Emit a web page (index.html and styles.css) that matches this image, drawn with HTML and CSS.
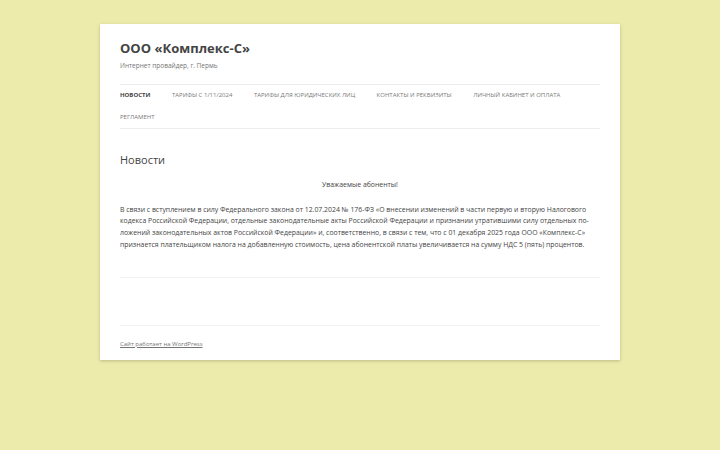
FILE: index.html
```html
<!DOCTYPE html>
<html lang="ru">
<head>
  <meta charset="UTF-8">
  <meta name="viewport" content="width=device-width, initial-scale=1.0">
  <title>Новости | ООО «Комплекс-С»</title>
  <link rel="stylesheet" href="styles.css">
</head>
<body>
  <div class="site">
    <header class="site-header">
      <h1 class="site-title"><a href="#">ООО «Комплекс-С»</a></h1>
      <p class="site-description">Интернет провайдер, г. Пермь</p>
      <nav class="main-navigation">
        <ul class="nav-menu">
          <li class="current"><a href="#">Новости</a></li>
          <li><a href="#">Тарифы с 1/11/2024</a></li>
          <li><a href="#">Тарифы для юридических лиц</a></li>
          <li><a href="#">Контакты и реквизиты</a></li>
          <li><a href="#">Личный кабинет и оплата</a></li>
          <li><a href="#">Регламент</a></li>
        </ul>
      </nav>
    </header>

    <main class="site-content">
      <article class="post">
        <h2 class="entry-title">Новости</h2>
        <div class="entry-content">
          <p class="greeting">Уважаемые абоненты!</p>
          <p>В связи с вступлением в силу Федерального закона от 12.07.2024 № 176-ФЗ «О внесении изменений в части первую и вторую Налогового кодекса Российской Федерации, отдельные законодательные акты Российской Федерации и признании утратившими силу отдельных по&shy;ложений законодательных актов Российской Федерации» и, соответственно, в связи с тем, что с 01 декабря 2025 года ООО «Комплекс-С» признается плательщиком налога на добавленную стоимость, цена абонентской платы увеличивается на сумму НДС 5 (пять) процентов.</p>
        </div>
      </article>
      <div class="widget-area"></div>
    </main>

    <footer class="site-info">
      <a href="#">Сайт работает на WordPress</a>
    </footer>
  </div>
</body>
</html>
```

FILE: styles.css
```css
/* Base */
* {
  box-sizing: border-box;
  margin: 0;
  padding: 0;
}

body {
  background-color: #ecebab;
  font-family: 'Open Sans', 'Noto Sans', sans-serif;
  color: #444;
  padding: 24px 100px;
}

a {
  color: inherit;
  text-decoration: none;
}

/* Page box */
.site {
  background-color: #fff;
  padding: 0 20px;
  box-shadow: 0 1px 3px rgba(100, 100, 60, 0.35);
}

/* Header */
.site-header {
  padding-top: 14px;
}

.site-title {
  font-size: 13px;
  font-weight: bold;
  line-height: 20px;
  color: #444;
}

.site-description {
  font-size: 6.5px;
  line-height: 12px;
  margin-top: 2px;
  color: #757575;
}

/* Menu */
.main-navigation {
  margin-top: 12px;
  border-top: 1px solid #ededed;
  border-bottom: 1px solid #ededed;
}

.nav-menu {
  list-style: none;
  display: flex;
  flex-wrap: wrap;
  column-gap: 21.5px;
}

.nav-menu li {
  font-size: 6px;
  line-height: 21.5px;
  text-transform: uppercase;
  color: #7a7a7a;
}

.nav-menu .current {
  font-weight: bold;
  color: #444;
}

/* Post */
.site-content {
  padding-top: 23px;
}

.entry-title {
  font-size: 11px;
  font-weight: normal;
  line-height: 16px;
  color: #444;
}

.entry-content p {
  font-size: 6.9px;
  line-height: 11.7px;
  color: #444;
}

.entry-content .greeting {
  text-align: center;
  margin: 11px 0 13px;
}

.widget-area {
  height: 49px;
  margin-top: 26px;
  border-top: 1px solid #f2f2f2;
  border-bottom: 1px solid #f2f2f2;
}

/* Footer */
.site-info {
  padding: 12px 0 10px;
  font-size: 6px;
  line-height: 12px;
  color: #757575;
}

.site-info a {
  text-decoration: underline;
}
```
